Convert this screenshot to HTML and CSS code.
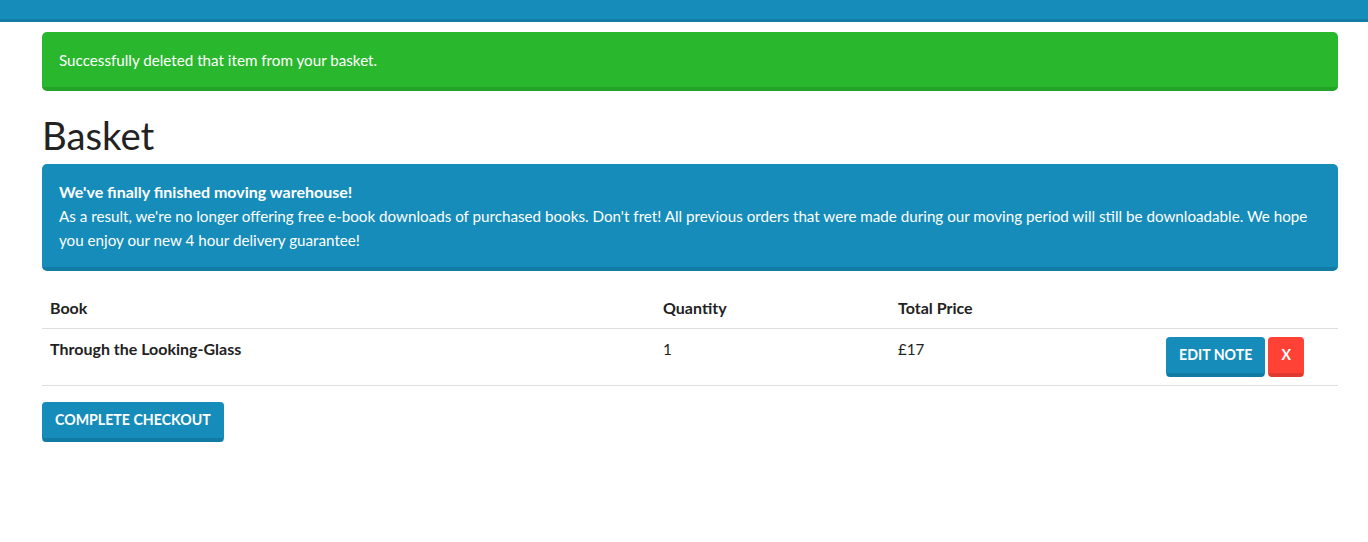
FILE: index.html
```html
<!DOCTYPE html>
<html lang="en">
<head>
<meta charset="utf-8">
<title>Basket</title>
<link rel="stylesheet" href="styles.css">
</head>
<body>
<nav class="navbar"></nav>
<main class="container">
  <div class="alert alert-success">Successfully deleted that item from your basket.</div>
  <h1 class="title">Basket</h1>
  <div class="alert alert-info">
    <strong>We've finally finished moving warehouse!</strong><br>
    As a result, we're no longer offering free e-book downloads of purchased books. Don't fret! All previous orders that were made during our moving period will still be downloadable. We hope you enjoy our new 4 hour delivery guarantee!
  </div>
  <table class="table">
    <colgroup>
      <col class="col-book">
      <col class="col-qty">
      <col class="col-price">
      <col class="col-actions">
    </colgroup>
    <thead>
      <tr><th>Book</th><th>Quantity</th><th>Total Price</th><th></th></tr>
    </thead>
    <tbody>
      <tr>
        <td class="book-name">Through the Looking-Glass</td>
        <td>1</td>
        <td>£17</td>
        <td><div class="actions"><button class="btn btn-primary">Edit Note</button><button class="btn btn-danger">X</button></div></td>
      </tr>
    </tbody>
  </table>
  <button class="btn btn-primary">Complete Checkout</button>
</main>
</body>
</html>
```
FILE: styles.css
```css
* { box-sizing: border-box; }
html, body { margin: 0; padding: 0; }
body {
  font-family: Lato, "Open Sans", sans-serif;
  font-size: 15.2px;
  line-height: 24px;
  color: #222;
  background: #fff;
}
.navbar {
  height: 22px;
  background: #168cba;
  border-bottom: 3px solid #127ca6;
}
.container {
  margin: 10px 30px 0 42px;
}
.alert {
  padding: 16px 17px 15px;
  border-bottom: 4px solid;
  border-radius: 5px;
  color: #fff;
  margin-bottom: 20px;
}
.alert-success {
  background: #29b72d;
  border-bottom-color: #24a328;
}
.alert-info {
  background: #168cba;
  border-bottom-color: #137ca5;
  margin-bottom: 17px;
}
.alert strong { font-weight: 700; font-size: 16px; }
.title {
  font-size: 38.3px;
  line-height: 48px;
  font-weight: 400;
  margin: 0 0 5px;
}
.table {
  width: 100%;
  border-collapse: collapse;
  margin: 0 0 16px;
  table-layout: fixed;
}
.col-book { width: 613px; }
.col-qty { width: 235px; }
.col-price { width: 268px; }
.table th, .table td {
  padding: 8px;
  text-align: left;
  vertical-align: top;
  border-bottom: 1px solid #dfdfe3;
}
.table th {
  font-weight: 700;
  font-size: 16px;
}
.book-name { font-weight: 700; font-size: 16px; }
.actions {
  display: flex;
  gap: 3px;
}
.btn {
  font-family: inherit;
  font-size: 14.2px;
  font-weight: 700;
  line-height: 24px;
  text-transform: uppercase;
  color: #fff;
  padding: 6px 12px;
  border-style: solid;
  border-width: 0 1px 4px 1px;
  border-radius: 4px;
  cursor: pointer;
  height: 40px;
  display: block;
}
.btn-primary {
  background: #168cba;
  border-color: #168cba;
  border-bottom-color: #127ba3;
}
.btn-danger {
  background: #ff4136;
  border-color: #ff4136;
  border-bottom-color: #e0392f;
}
```
